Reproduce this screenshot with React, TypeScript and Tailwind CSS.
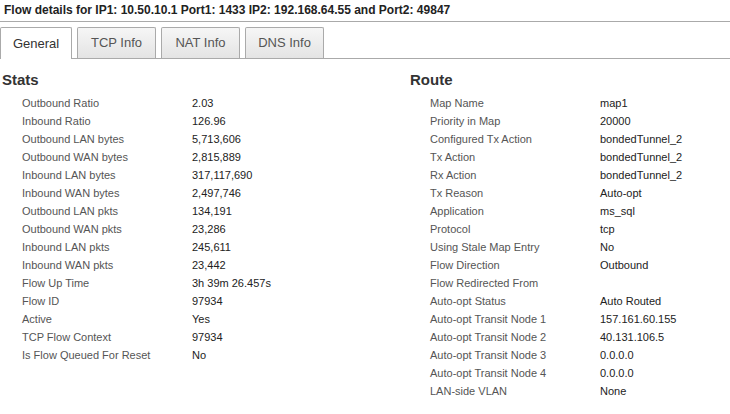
import React from "react";

const stats: [string, string][] = [
  ["Outbound Ratio", "2.03"],
  ["Inbound Ratio", "126.96"],
  ["Outbound LAN bytes", "5,713,606"],
  ["Outbound WAN bytes", "2,815,889"],
  ["Inbound LAN bytes", "317,117,690"],
  ["Inbound WAN bytes", "2,497,746"],
  ["Outbound LAN pkts", "134,191"],
  ["Outbound WAN pkts", "23,286"],
  ["Inbound LAN pkts", "245,611"],
  ["Inbound WAN pkts", "23,442"],
  ["Flow Up Time", "3h 39m 26.457s"],
  ["Flow ID", "97934"],
  ["Active", "Yes"],
  ["TCP Flow Context", "97934"],
  ["Is Flow Queued For Reset", "No"],
];

const route: [string, string][] = [
  ["Map Name", "map1"],
  ["Priority in Map", "20000"],
  ["Configured Tx Action", "bondedTunnel_2"],
  ["Tx Action", "bondedTunnel_2"],
  ["Rx Action", "bondedTunnel_2"],
  ["Tx Reason", "Auto-opt"],
  ["Application", "ms_sql"],
  ["Protocol", "tcp"],
  ["Using Stale Map Entry", "No"],
  ["Flow Direction", "Outbound"],
  ["Flow Redirected From", ""],
  ["Auto-opt Status", "Auto Routed"],
  ["Auto-opt Transit Node 1", "157.161.60.155"],
  ["Auto-opt Transit Node 2", "40.131.106.5"],
  ["Auto-opt Transit Node 3", "0.0.0.0"],
  ["Auto-opt Transit Node 4", "0.0.0.0"],
  ["LAN-side VLAN", "None"],
];

function Section({ title, rows }: { title: string; rows: [string, string][] }) {
  return (
    <div className="flex flex-col">
      <div className="h-[22px] pl-[2px] text-[15px] font-bold leading-[22px] text-[#333]">{title}</div>
      <div className="mt-[3px] flex flex-col pl-[22px]">
        {rows.map(([k, v]) => (
          <div key={k} className="flex h-[18px] items-center text-[11px]">
            <div className="w-[170px] text-[#555]">{k}</div>
            <div className="text-[#222]">{v}</div>
          </div>
        ))}
      </div>
    </div>
  );
}

export default function App() {
  const tabs = ["General", "TCP Info", "NAT Info", "DNS Info"];
  return (
    <div
      className="h-[414px] w-[730px] overflow-hidden bg-white"
      style={{ fontFamily: '"Liberation Sans", Arial, sans-serif' }}
    >
      <div className="h-[22px] border-b border-[#aaa] pl-[4px] text-[12px] font-bold leading-[20px] text-[#222]">
        Flow details for IP1: 10.50.10.1 Port1: 1433 IP2: 192.168.64.55 and Port2: 49847
      </div>
      <div className="mt-[5px] flex h-[32px] items-end gap-[5px] border-b border-[#aaa]">
        {tabs.map((t, i) =>
          i === 0 ? (
            <div
              key={t}
              className="-mb-px flex h-[32px] w-[72px] items-center justify-center rounded-t-[2px] border border-b-0 border-[#aaa] bg-white text-[13px] text-[#333]"
            >
              {t}
            </div>
          ) : (
            <div
              key={t}
              className="flex h-[31px] w-[79px] items-center justify-center rounded-t-[2px] border border-b-0 border-[#aaa] bg-gradient-to-b from-[#f6f6f6] to-[#e4e4e4] text-[13px] text-[#555]"
            >
              {t}
            </div>
          )
        )}
      </div>
      <div className="mt-[10px] flex">
        <div className="w-[408px]">
          <Section title="Stats" rows={stats} />
        </div>
        <div className="flex-1">
          <Section title="Route" rows={route} />
        </div>
      </div>
    </div>
  );
}
